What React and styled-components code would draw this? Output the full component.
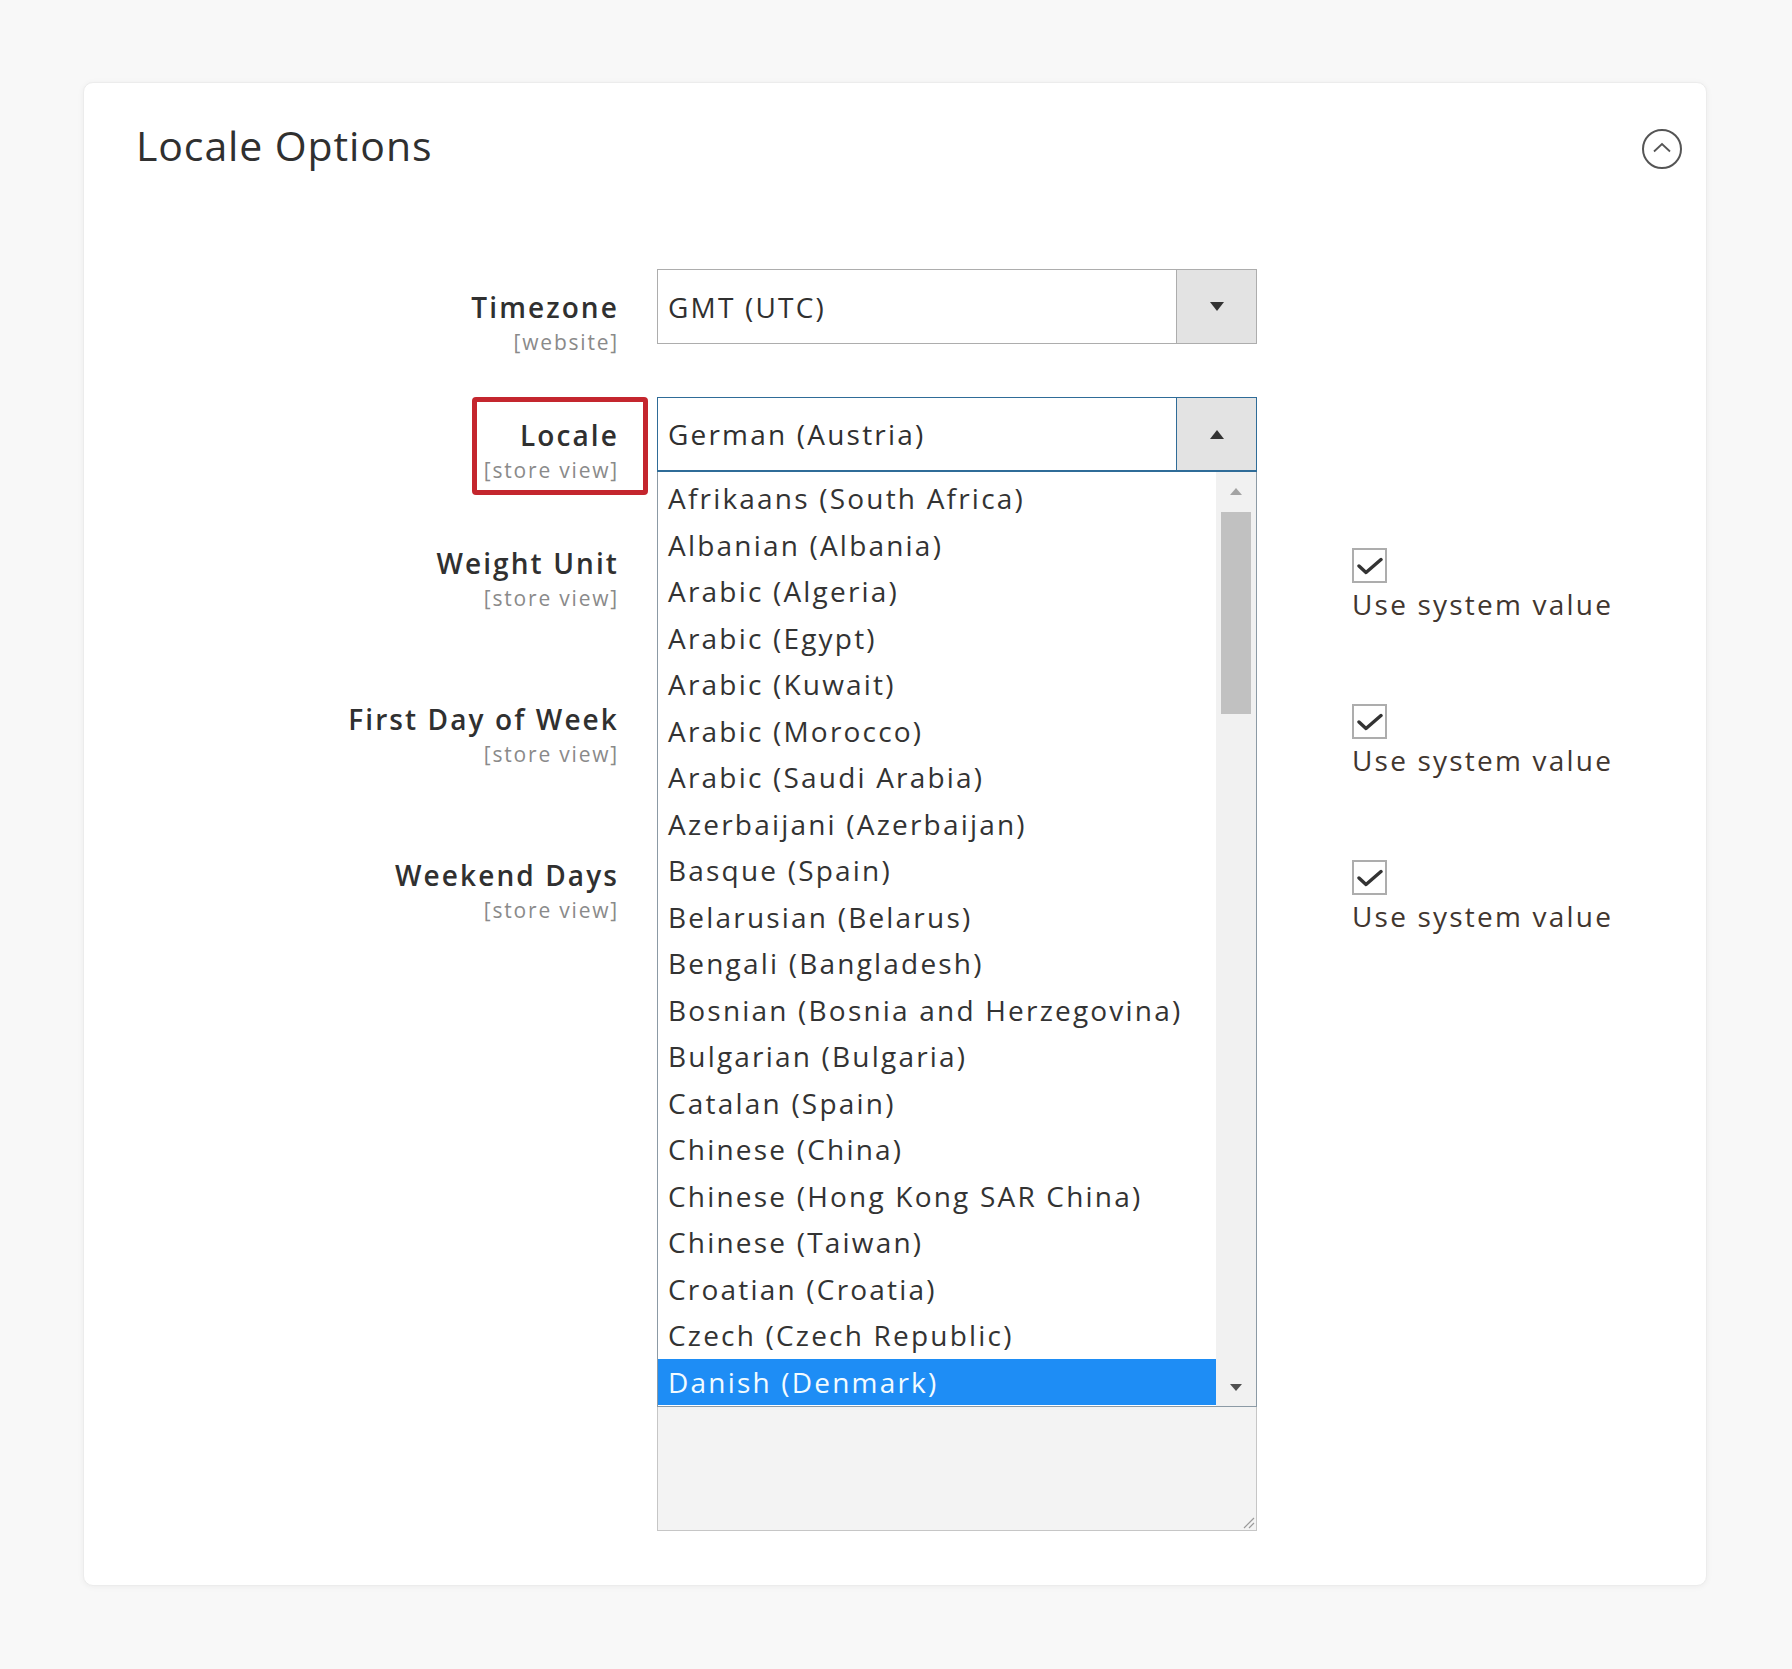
import styled, { createGlobalStyle } from "styled-components";

const GlobalStyle = createGlobalStyle`
    body {
        margin: 0;
        background-color: #f8f8f8;
        font-family: "Open Sans", "Noto Sans", sans-serif;
        color: #303030;
    }
`;

const locales = [
    "Afrikaans (South Africa)",
    "Albanian (Albania)",
    "Arabic (Algeria)",
    "Arabic (Egypt)",
    "Arabic (Kuwait)",
    "Arabic (Morocco)",
    "Arabic (Saudi Arabia)",
    "Azerbaijani (Azerbaijan)",
    "Basque (Spain)",
    "Belarusian (Belarus)",
    "Bengali (Bangladesh)",
    "Bosnian (Bosnia and Herzegovina)",
    "Bulgarian (Bulgaria)",
    "Catalan (Spain)",
    "Chinese (China)",
    "Chinese (Hong Kong SAR China)",
    "Chinese (Taiwan)",
    "Croatian (Croatia)",
    "Czech (Czech Republic)",
    "Danish (Denmark)"
];

function CollapseIcon() {
    return (
        <svg width="42" height="42" viewBox="0 0 42 42">
            <circle cx="21" cy="21" r="19" fill="none" stroke="#555555" strokeWidth="2" />
            <path d="M13 23.5 L21 16 L29 23.5" fill="none" stroke="#555555" strokeWidth="1.8" />
        </svg>
    );
}

function Check() {
    return (
        <svg width="26" height="18" viewBox="0 0 26 18">
            <path d="M2 9 L9 15.5 L24 2.5" fill="none" stroke="#333333" strokeWidth="3.4" strokeLinecap="round" strokeLinejoin="round" />
        </svg>
    );
}

function UseSystem() {
    return (
        <UseDefault>
            <CheckBox><Check /></CheckBox>
            <UseText>Use system value</UseText>
        </UseDefault>
    );
}

function App() {
    return (
        <>
            <GlobalStyle />
            <Page>
                <Card>
                    <Header>
                        <Title>Locale Options</Title>
                        <IconButton><CollapseIcon /></IconButton>
                    </Header>

                    <Form>
                        <Row>
                            <LabelBlock>
                                <Label>Timezone</Label>
                                <Scope>[website]</Scope>
                            </LabelBlock>
                            <Control>
                                <Select>
                                    <SelectValue>GMT (UTC)</SelectValue>
                                    <ArrowButton><Triangle down /></ArrowButton>
                                </Select>
                            </Control>
                        </Row>

                        <Row>
                            <LabelBlock>
                                <Highlight />
                                <Label>Locale</Label>
                                <Scope>[store view]</Scope>
                            </LabelBlock>
                            <Control>
                                <Select open>
                                    <SelectValue>German (Austria)</SelectValue>
                                    <ArrowButton open><Triangle /></ArrowButton>
                                </Select>
                                <Popup>
                                    <Options>
                                        {locales.map((name, i) => (
                                            <Option key={name} selected={i === locales.length - 1}>{name}</Option>
                                        ))}
                                    </Options>
                                    <ScrollBar>
                                        <ScrollArrow><SmallTriangle /></ScrollArrow>
                                        <Track><Thumb /></Track>
                                        <ScrollArrow><SmallTriangle down /></ScrollArrow>
                                    </ScrollBar>
                                </Popup>
                            </Control>
                        </Row>

                        <Row>
                            <LabelBlock>
                                <Label>Weight Unit</Label>
                                <Scope>[store view]</Scope>
                            </LabelBlock>
                            <Control>
                                {/* covered by the open locale list */}
                                <Select disabled>
                                    <SelectValue />
                                    <ArrowButton><Triangle down /></ArrowButton>
                                </Select>
                            </Control>
                            <UseSystem />
                        </Row>

                        <Row>
                            <LabelBlock>
                                <Label>First Day of Week</Label>
                                <Scope>[store view]</Scope>
                            </LabelBlock>
                            <Control>
                                <Select disabled>
                                    <SelectValue />
                                    <ArrowButton><Triangle down /></ArrowButton>
                                </Select>
                            </Control>
                            <UseSystem />
                        </Row>

                        <Row last>
                            <LabelBlock>
                                <Label>Weekend Days</Label>
                                <Scope>[store view]</Scope>
                            </LabelBlock>
                            <Control>
                                <MultiSelect>
                                    <Grip>
                                        <svg width="14" height="14" viewBox="0 0 14 14">
                                            <path d="M13 3 L3 13 M13 8 L8 13" stroke="#9a9a9a" strokeWidth="1.2" />
                                        </svg>
                                    </Grip>
                                </MultiSelect>
                            </Control>
                            <UseSystem />
                        </Row>
                    </Form>
                </Card>
            </Page>
        </>
    );
}

const Page = styled.div`
    padding: 82px 85px 85px 83px;
`;
const Card = styled.div`
    width: 1624px;
    box-sizing: border-box;
    padding: 34px 23px 54px 52px;
    background-color: #ffffff;
    border: 1px solid #ececec;
    border-radius: 10px;
    box-shadow: 0 1px 6px rgba(0, 0, 0, 0.05);
`;
const Header = styled.div`
    display: flex;
    justify-content: space-between;
    align-items: flex-start;
`;
const Title = styled.h2`
    margin: 0;
    font-size: 41px;
    line-height: 56px;
    font-weight: 400;
    letter-spacing: 0.9px;
    color: #303030;
`;
const IconButton = styled.div`
    width: 42px;
    height: 42px;
    margin-top: 11px;
    display: flex;
`;
const Form = styled.div`
    margin-top: 96px;
    display: flex;
    flex-direction: column;
`;
const Row = styled.div`
    display: flex;
    align-items: flex-start;
    margin-bottom: ${props => props.last ? 0 : 37}px;
`;
const LabelBlock = styled.div`
    position: relative;
    width: 483px;
    margin-right: 38px;
    padding-top: 19px;
    padding-bottom: 3px;
    text-align: right;
    flex-shrink: 0;
`;
const Highlight = styled.div`
    position: absolute;
    top: 0;
    bottom: -7px;
    left: 336px;
    right: -29px;
    border: 5px solid #c4262e;
    border-radius: 4px;
    pointer-events: none;
`;
const Label = styled.div`
    font-size: 28px;
    line-height: 38px;
    font-weight: 600;
    letter-spacing: 2.1px;
    color: #303030;
`;
const Scope = styled.div`
    margin-top: 1px;
    font-size: 21px;
    line-height: 30px;
    letter-spacing: 1.8px;
    color: #8a8a8a;
`;
const Control = styled.div`
    position: relative;
    width: 600px;
    flex-shrink: 0;
`;
const Select = styled.div`
    display: flex;
    height: 75px;
    box-sizing: border-box;
    border: 1px solid ${props => props.open ? "#2f6c98" : "#adadad"};
    border-bottom-width: ${props => props.open ? 2 : 1}px;
    background-color: ${props => props.disabled ? "#e9e9e9" : "#ffffff"};
`;
const SelectValue = styled.div`
    flex: 1;
    display: flex;
    align-items: center;
    padding-left: 10px;
    font-size: 28px;
    letter-spacing: 2.2px;
    color: #303030;
`;
const ArrowButton = styled.div`
    width: 79px;
    display: flex;
    align-items: center;
    justify-content: center;
    background-color: #e3e3e3;
    border-left: 1px solid ${props => props.open ? "#2f6c98" : "#adadad"};
`;
const Triangle = styled.span`
    width: 0;
    height: 0;
    border-left: 7px solid transparent;
    border-right: 7px solid transparent;
    ${props => props.down ? "border-top: 9px solid #333333;" : "border-bottom: 9px solid #333333;"}
`;
const Popup = styled.div`
    position: absolute;
    top: 100%;
    left: 0;
    width: 600px;
    height: 935px;
    box-sizing: border-box;
    display: flex;
    background-color: #ffffff;
    border: 1px solid #8c9aa5;
    border-top: none;
    z-index: 5;
`;
const Options = styled.div`
    flex: 1;
    padding-top: 3px;
`;
const Option = styled.div`
    height: 46.5px;
    padding-left: 10px;
    font-size: 28px;
    line-height: 46.5px;
    letter-spacing: 2.2px;
    white-space: nowrap;
    color: ${props => props.selected ? "#f2fbff" : "#333333"};
    background-color: ${props => props.selected ? "#1e8df5" : "transparent"};
`;
const ScrollBar = styled.div`
    width: 40px;
    display: flex;
    flex-direction: column;
    background-color: #f1f1f1;
`;
const ScrollArrow = styled.div`
    height: 38px;
    display: flex;
    align-items: center;
    justify-content: center;
`;
const SmallTriangle = styled.span`
    width: 0;
    height: 0;
    border-left: 6px solid transparent;
    border-right: 6px solid transparent;
    ${props => props.down ? "border-top: 7px solid #505050;" : "border-bottom: 7px solid #a3a3a3;"}
`;
const Track = styled.div`
    flex: 1;
    padding: 2px 5px 0;
`;
const Thumb = styled.div`
    height: 202px;
    background-color: #c1c1c1;
`;
const MultiSelect = styled.div`
    position: relative;
    height: 694px;
    box-sizing: border-box;
    border: 1px solid #c6c6c6;
    background-color: #f3f3f3;
`;
const Grip = styled.div`
    position: absolute;
    right: 1px;
    bottom: 1px;
    display: flex;
`;
const UseDefault = styled.div`
    margin-left: 95px;
    padding-top: 23px;
    padding-bottom: 21px;
    display: flex;
    flex-direction: column;
    align-items: flex-start;
`;
const CheckBox = styled.div`
    width: 35px;
    height: 35px;
    box-sizing: border-box;
    border: 2px solid #adadad;
    background-color: #ffffff;
    display: flex;
    align-items: center;
    justify-content: center;
`;
const UseText = styled.div`
    margin-top: 2px;
    font-size: 28px;
    line-height: 38px;
    letter-spacing: 2.2px;
    color: #41362f;
    white-space: nowrap;
`;

export default App;
